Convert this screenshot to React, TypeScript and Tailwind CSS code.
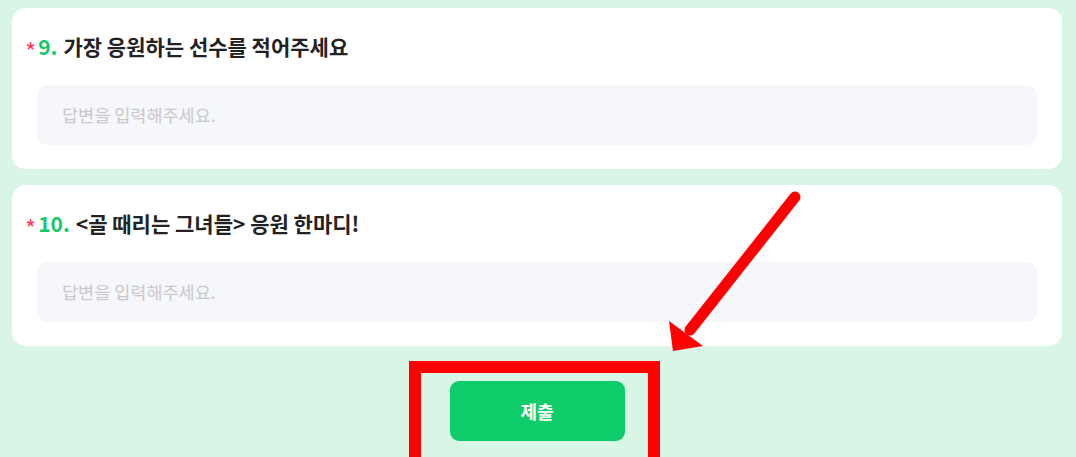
import React from 'react';

const font = { fontFamily: '"Noto Sans CJK KR", "Noto Sans", sans-serif' };

function QuestionCard({ num, title }: { num: string; title: string }) {
  return (
    <div className="bg-white rounded-[14px] px-[25px] pt-[24px] pb-[24px]">
      <h3 className="flex items-center h-[30px] -ml-[12px] text-[21px] font-bold text-[#222222]">
        <span className="text-[#ff3b5c] text-[24px] font-normal leading-none mr-[2px] mt-[8px]">*</span>
        <span className="text-[#15c96a] mr-[6px]">{num}.</span>
        <span>{title}</span>
      </h3>
      <div className="mt-[23px] h-[60px] rounded-[10px] bg-[#f6f7fa] flex items-center px-[25px]">
        <span className="text-[17.5px] text-[#c9c9cd]">답변을 입력해주세요.</span>
      </div>
    </div>
  );
}

export default function App() {
  return (
    <div className="relative w-[1076px] h-[457px] overflow-hidden bg-[#d9f5e6]" style={font}>
      <div className="flex flex-col gap-[16px] pl-[12px] pr-[14px] pt-[8px]">
        <QuestionCard num="9" title="가장 응원하는 선수를 적어주세요" />
        <QuestionCard num="10" title="<골 때리는 그녀들> 응원 한마디!" />
        <div className="flex justify-center pt-[19px]">
          <button
            type="button"
            className="w-[175px] h-[60px] rounded-[9px] bg-[#0fcc6a] text-white text-[18px] font-bold"
          >
            제출
          </button>
        </div>
      </div>

      {/* annotation overlay */}
      <div className="absolute left-[409px] top-[361px] w-[251px] h-[110px] border-[12px] border-[#ff0000]" />
      <svg className="absolute left-0 top-0" width="1076" height="457" viewBox="0 0 1076 457">
        <line x1="795" y1="197" x2="690" y2="330" stroke="#ff0000" strokeWidth="11" strokeLinecap="round" />
        <polygon points="673,351 669,321 703,346" fill="#ff0000" />
      </svg>
    </div>
  );
}
